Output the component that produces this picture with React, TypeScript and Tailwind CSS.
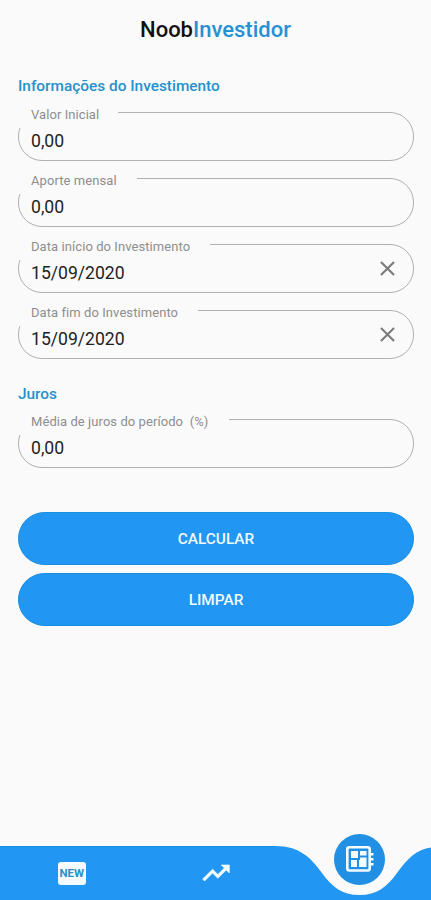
import React from "react";
import { MdClose } from "react-icons/md";

type FieldProps = {
  label: string;
  value: string;
  gapClass: string;
  clearable?: boolean;
};

function Field({ label, value, gapClass, clearable }: FieldProps) {
  return (
    <div className="relative flex h-[49px] items-center justify-between rounded-[24px] border border-[#b0b0b0] pr-[13px] pl-3">
      <label
        className={`absolute -top-[2px] -left-[2px] h-[17px] bg-[#fafafa] pl-[14px] text-[13px] leading-[7px] tracking-[0.07px] whitespace-pre text-[#8e8e8e] ${gapClass}`}
      >
        {label}
      </label>
      <span className="translate-y-[3.5px] text-[17.6px] leading-6 text-[#222]">{value}</span>
      {clearable && <MdClose className="size-[25px] text-[#7b7b7b]" />}
    </div>
  );
}

function ActionButton({ children }: { children: React.ReactNode }) {
  return (
    <button className="flex h-[53px] w-full items-center justify-center rounded-full border border-[#198de0] bg-[#2196f3] pt-[2px] text-[15.4px] font-medium text-[#f0fbff]">
      {children}
    </button>
  );
}

function TrendingIcon() {
  return (
    <svg viewBox="0 0 24 24" className="size-8 translate-x-px text-[#f5fcff]">
      <path
        d="M16 6l2.29 2.29-4.88 4.88-4-4L2 16.59 3.41 18l6-6 4 4 6.3-6.29L22 12V6z"
        fill="currentColor"
        stroke="currentColor"
        strokeWidth="0.5"
      />
    </svg>
  );
}

function BoardIcon() {
  return (
    <svg width="28" height="26" viewBox="0 0 28 26" className="translate-x-px text-[#f5fcff]">
      <rect x="1.3" y="1.3" width="22.4" height="23.2" rx="2" fill="none" stroke="currentColor" strokeWidth="2.6" />
      <path
        d="M5 5H12V12H5ZM5 14H11V21H5ZM14 5H20.5V9.5H14ZM14 11.5H20.5V21H13V14H14ZM24 7H27.5V9.4H24ZM24 12H27.5V14.4H24ZM24 17H27.5V19.4H24Z"
        fill="currentColor"
      />
    </svg>
  );
}

export default function App() {
  return (
    <div className="flex h-[900px] w-[431px] flex-col overflow-hidden bg-[#fafafa] font-['Roboto',sans-serif]">
      <header className="flex h-[60px] items-center justify-center pb-px text-[22px] font-medium text-[#111]">
        <span>Noob</span>
        <span className="text-[#2591d4]">Investidor</span>
      </header>

      <main className="flex grow flex-col pr-[17px] pl-[18px]">
        <h2 className="mt-[14px] h-6 text-[15.4px] leading-6 font-medium text-[#2591cd]">
          Informações do Investimento
        </h2>
        <div className="mt-[14px] flex flex-col gap-[17px]">
          <Field label="Valor Inicial" value="0,00" gapClass="w-[101px]" />
          <Field label="Aporte mensal" value="0,00" gapClass="w-[120px]" />
          <Field label="Data início do Investimento" value="15/09/2020" gapClass="w-[193px]" clearable />
          <Field label="Data fim do Investimento" value="15/09/2020" gapClass="w-[181px]" clearable />
        </div>
        <h2 className="mt-[23px] h-6 text-[15.4px] leading-6 font-medium text-[#2591cd]">Juros</h2>
        <div className="mt-[13px]">
          <Field label="Média de juros do período  (%)" value="0,00" gapClass="w-[212px]" />
        </div>
        <div className="mt-11 flex flex-col gap-[8px]">
          <ActionButton>CALCULAR</ActionButton>
          <ActionButton>LIMPAR</ActionButton>
        </div>
      </main>

      <nav className="relative h-[54px] shrink-0">
        <svg className="absolute inset-0" width="431" height="54" viewBox="0 0 431 54">
          <path
            d="M0 0H275C300 0 311 12 322 27C332 41 342 49 359.5 49C377 49 387 41 397 27C407 13 417 3 431 1.5V54H0Z"
            fill="#2196f3"
          />
          <path d="M0 .5H275" stroke="#198de0" />
        </svg>
        <div className="relative grid h-full grid-cols-3 items-center justify-items-center">
          <span className="flex h-[23px] w-[28px] items-center justify-center rounded-[3px] bg-[#f5fcff] pt-px text-[11.5px] leading-none font-bold text-[#2c8fc8]">
            NEW
          </span>
          <TrendingIcon />
          <span className="flex size-[51px] -translate-y-[14px] items-center justify-center rounded-full bg-[#2190e4]">
            <BoardIcon />
          </span>
        </div>
      </nav>
    </div>
  );
}
